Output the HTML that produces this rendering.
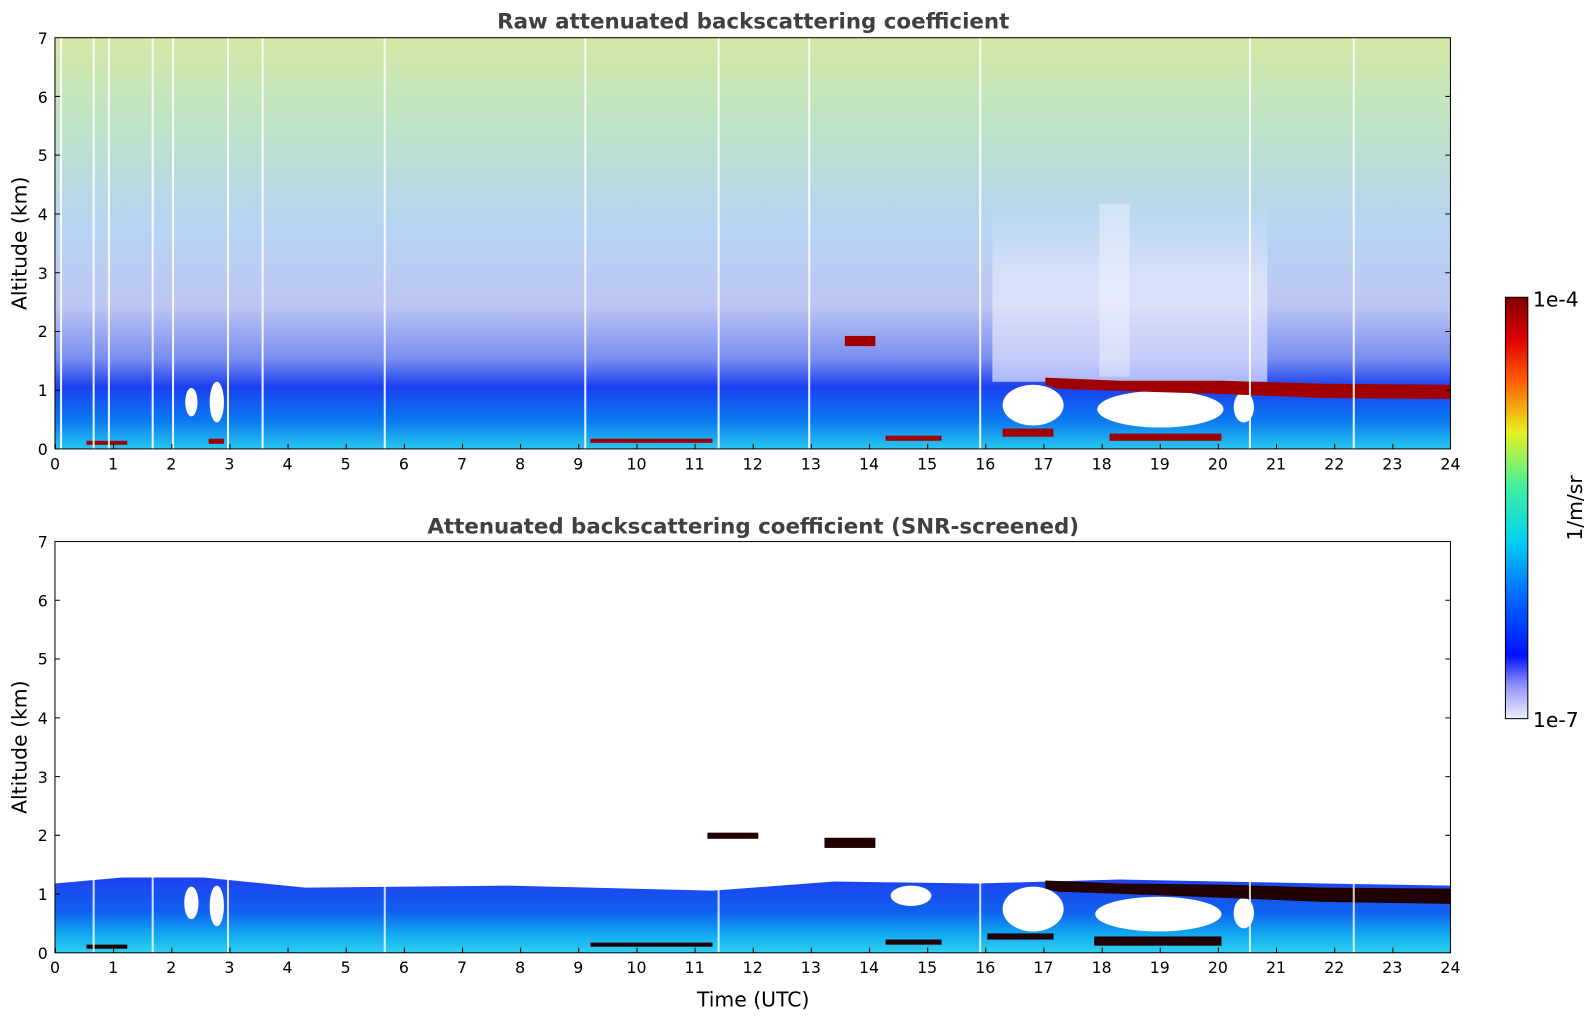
<!DOCTYPE html>
<html><head><style>
body{margin:0;background:#fff;width:1595px;height:1020px;overflow:hidden}
</style></head><body>
<svg width="1595" height="1020" viewBox="0 0 1567 1002" xmlns="http://www.w3.org/2000/svg" font-family="DejaVu Sans, Liberation Sans, sans-serif">
<defs>
<linearGradient id="g1" x1="0" y1="0" x2="0" y2="1">
<stop offset="0" stop-color="#d4e8a4"/>
<stop offset="0.2" stop-color="#bfe4c4"/>
<stop offset="0.45" stop-color="#b6d4f2"/>
<stop offset="0.65" stop-color="#bcc6f4"/>
<stop offset="0.78" stop-color="#7a8ef0"/>
<stop offset="0.85" stop-color="#1a40f0"/>
<stop offset="0.93" stop-color="#0a78f0"/>
<stop offset="1" stop-color="#28c8f0"/>
</linearGradient>
<linearGradient id="g2" x1="0" y1="0" x2="0" y2="1">
<stop offset="0" stop-color="#2040f0"/>
<stop offset="0.45" stop-color="#1060f0"/>
<stop offset="0.75" stop-color="#10a8f0"/>
<stop offset="1" stop-color="#30d0f0"/>
</linearGradient>
<linearGradient id="cb" x1="0" y1="1" x2="0" y2="0">
<stop offset="0" stop-color="#f0f0ff"/>
<stop offset="0.08" stop-color="#9090f8"/>
<stop offset="0.15" stop-color="#0010ff"/>
<stop offset="0.3" stop-color="#0070ff"/>
<stop offset="0.42" stop-color="#00d0f0"/>
<stop offset="0.55" stop-color="#40f0a0"/>
<stop offset="0.68" stop-color="#e8f020"/>
<stop offset="0.8" stop-color="#ff6000"/>
<stop offset="0.9" stop-color="#e00000"/>
<stop offset="1" stop-color="#800000"/>
</linearGradient>
<linearGradient id="fadeW" x1="0" y1="0" x2="0" y2="1">
<stop offset="0" stop-color="#fff" stop-opacity="0"/>
<stop offset="0.4" stop-color="#fff" stop-opacity="0.4"/>
<stop offset="1" stop-color="#fff" stop-opacity="0.6"/>
</linearGradient>
</defs>
<text x="740" y="28" text-anchor="middle" font-size="21" font-weight="bold" fill="#404040">Raw attenuated backscattering coefficient</text>
<text x="740" y="524" text-anchor="middle" font-size="21" font-weight="bold" fill="#404040">Attenuated backscattering coefficient (SNR-screened)</text>
<rect x="54" y="37" width="1371" height="404" fill="url(#g1)"/>
<rect x="975" y="200" width="270" height="175" fill="url(#fadeW)"/>
<rect x="1080" y="200" width="30" height="170" fill="#fff" opacity="0.35"/>
<g fill="#fff">
<ellipse cx="1015" cy="398" rx="30" ry="20"/>
<ellipse cx="1140" cy="402" rx="62" ry="18"/>
<ellipse cx="1222" cy="400" rx="10" ry="15"/>
<ellipse cx="188" cy="395" rx="6" ry="14"/>
<ellipse cx="213" cy="395" rx="7" ry="20"/>
</g>
<g fill="#a00000">
<polygon points="1027,371 1100,374 1200,374 1300,377 1425,378 1425,392 1300,391 1200,387 1100,384 1040,382 1027,378"/>
<rect x="985" y="421" width="50" height="8"/>
<rect x="1090" y="426" width="110" height="7"/>
<rect x="580" y="431" width="120" height="4"/>
<rect x="870" y="428" width="55" height="5"/>
<rect x="830" y="330" width="30" height="10"/>
<rect x="85" y="433" width="40" height="4"/>
<rect x="205" y="431" width="15" height="5"/>
</g>
<g stroke="#fff" stroke-width="2" opacity="0.9">
<line x1="60" y1="37" x2="60" y2="441"/><line x1="92" y1="37" x2="92" y2="441"/><line x1="107" y1="37" x2="107" y2="441"/><line x1="150" y1="37" x2="150" y2="441"/><line x1="170" y1="37" x2="170" y2="441"/><line x1="224" y1="37" x2="224" y2="441"/><line x1="258" y1="37" x2="258" y2="441"/><line x1="378" y1="37" x2="378" y2="441"/><line x1="575" y1="37" x2="575" y2="441"/><line x1="706" y1="37" x2="706" y2="441"/><line x1="795" y1="37" x2="795" y2="441"/><line x1="963" y1="37" x2="963" y2="441"/><line x1="1228" y1="37" x2="1228" y2="441"/><line x1="1330" y1="37" x2="1330" y2="441"/>
</g>
<rect x="54" y="37" width="1371" height="404" fill="none" stroke="#000" stroke-width="1"/>
<polygon points="54,868 120,862 200,862 300,872 500,870 700,875 820,866 960,868 1100,864 1300,868 1425,870 1425,936 54,936" fill="url(#g2)"/>
<g fill="#fff">
<ellipse cx="1015" cy="893" rx="30" ry="22"/>
<ellipse cx="1138" cy="898" rx="62" ry="17"/>
<ellipse cx="1222" cy="897" rx="10" ry="15"/>
<ellipse cx="188" cy="887" rx="7" ry="16"/>
<ellipse cx="213" cy="890" rx="7" ry="20"/>
<ellipse cx="895" cy="880" rx="20" ry="10"/>
</g>
<g fill="#200000">
<polygon points="1027,865 1100,868 1200,869 1300,872 1425,873 1425,888 1300,886 1200,882 1100,878 1040,876 1027,873"/>
<rect x="970" y="917" width="65" height="6"/>
<rect x="1075" y="920" width="125" height="9"/>
<rect x="580" y="926" width="120" height="4"/>
<rect x="870" y="923" width="55" height="5"/>
<rect x="810" y="823" width="50" height="10"/>
<rect x="695" y="818" width="50" height="6"/>
<rect x="85" y="928" width="40" height="4"/>
</g>
<g stroke="#fff" stroke-width="2" opacity="0.8">
<line x1="92" y1="860" x2="92" y2="936"/><line x1="150" y1="860" x2="150" y2="936"/><line x1="224" y1="860" x2="224" y2="936"/><line x1="378" y1="860" x2="378" y2="936"/><line x1="706" y1="860" x2="706" y2="936"/><line x1="963" y1="860" x2="963" y2="936"/><line x1="1228" y1="860" x2="1228" y2="936"/><line x1="1330" y1="860" x2="1330" y2="936"/>
</g>
<rect x="54" y="532" width="1371" height="404" fill="none" stroke="#000" stroke-width="1"/>
<g stroke="#000" stroke-width="1">
<path d="M54.5 441v-5M111.6 441v-5M168.8 441v-5M225.9 441v-5M283 441v-5M340.1 441v-5M397.3 441v-5M454.4 441v-5M511.5 441v-5M568.6 441v-5M625.8 441v-5M682.9 441v-5M740 441v-5M797.1 441v-5M854.3 441v-5M911.4 441v-5M968.5 441v-5M1025.6 441v-5M1082.8 441v-5M1139.9 441v-5M1197 441v-5M1254.1 441v-5M1311.3 441v-5M1368.4 441v-5M1425 441v-5
M54 383.3h5M54 325.6h5M54 267.9h5M54 210.2h5M54 152.4h5M54 94.7h5M1425 383.3h-5M1425 325.6h-5M1425 267.9h-5M1425 210.2h-5M1425 152.4h-5M1425 94.7h-5"/>
<path transform="translate(0,495)" d="M54.5 441v-5M111.6 441v-5M168.8 441v-5M225.9 441v-5M283 441v-5M340.1 441v-5M397.3 441v-5M454.4 441v-5M511.5 441v-5M568.6 441v-5M625.8 441v-5M682.9 441v-5M740 441v-5M797.1 441v-5M854.3 441v-5M911.4 441v-5M968.5 441v-5M1025.6 441v-5M1082.8 441v-5M1139.9 441v-5M1197 441v-5M1254.1 441v-5M1311.3 441v-5M1368.4 441v-5M1425 441v-5
M54 383.3h5M54 325.6h5M54 267.9h5M54 210.2h5M54 152.4h5M54 94.7h5M1425 383.3h-5M1425 325.6h-5M1425 267.9h-5M1425 210.2h-5M1425 152.4h-5M1425 94.7h-5"/>
</g>
<g font-size="15.5" fill="#000" text-anchor="middle">
<g>
<text x="54" y="461">0</text><text x="111.1" y="461">1</text><text x="168.3" y="461">2</text><text x="225.4" y="461">3</text><text x="282.5" y="461">4</text><text x="339.6" y="461">5</text><text x="396.8" y="461">6</text><text x="453.9" y="461">7</text><text x="511" y="461">8</text><text x="568.1" y="461">9</text><text x="625.3" y="461">10</text><text x="682.4" y="461">11</text><text x="739.5" y="461">12</text><text x="796.6" y="461">13</text><text x="853.8" y="461">14</text><text x="910.9" y="461">15</text><text x="968" y="461">16</text><text x="1025.1" y="461">17</text><text x="1082.3" y="461">18</text><text x="1139.4" y="461">19</text><text x="1196.5" y="461">20</text><text x="1253.6" y="461">21</text><text x="1310.8" y="461">22</text><text x="1367.9" y="461">23</text><text x="1425" y="461">24</text>
</g>
<g transform="translate(0,495)">
<text x="54" y="461">0</text><text x="111.1" y="461">1</text><text x="168.3" y="461">2</text><text x="225.4" y="461">3</text><text x="282.5" y="461">4</text><text x="339.6" y="461">5</text><text x="396.8" y="461">6</text><text x="453.9" y="461">7</text><text x="511" y="461">8</text><text x="568.1" y="461">9</text><text x="625.3" y="461">10</text><text x="682.4" y="461">11</text><text x="739.5" y="461">12</text><text x="796.6" y="461">13</text><text x="853.8" y="461">14</text><text x="910.9" y="461">15</text><text x="968" y="461">16</text><text x="1025.1" y="461">17</text><text x="1082.3" y="461">18</text><text x="1139.4" y="461">19</text><text x="1196.5" y="461">20</text><text x="1253.6" y="461">21</text><text x="1310.8" y="461">22</text><text x="1367.9" y="461">23</text><text x="1425" y="461">24</text>
</g>
</g>
<g font-size="15.5" fill="#000" text-anchor="end">
<text x="47" y="447">0</text><text x="47" y="389">1</text><text x="47" y="331">2</text><text x="47" y="274">3</text><text x="47" y="216">4</text><text x="47" y="158">5</text><text x="47" y="101">6</text><text x="47" y="43">7</text>
<g transform="translate(0,495)"><text x="47" y="447">0</text><text x="47" y="389">1</text><text x="47" y="331">2</text><text x="47" y="274">3</text><text x="47" y="216">4</text><text x="47" y="158">5</text><text x="47" y="101">6</text><text x="47" y="43">7</text></g>
</g>
<text transform="translate(26,239) rotate(-90)" text-anchor="middle" font-size="20">Altitude (km)</text>
<text transform="translate(26,734) rotate(-90)" text-anchor="middle" font-size="20">Altitude (km)</text>
<text x="740" y="989" text-anchor="middle" font-size="20">Time (UTC)</text>
<rect x="1479" y="292" width="22" height="414" fill="url(#cb)" stroke="#000" stroke-width="1"/>
<text x="1506" y="301" font-size="20">1e-4</text>
<text x="1506" y="714" font-size="20">1e-7</text>
<text transform="translate(1554,499) rotate(-90)" text-anchor="middle" font-size="20">1/m/sr</text>
</svg>
</body></html>
